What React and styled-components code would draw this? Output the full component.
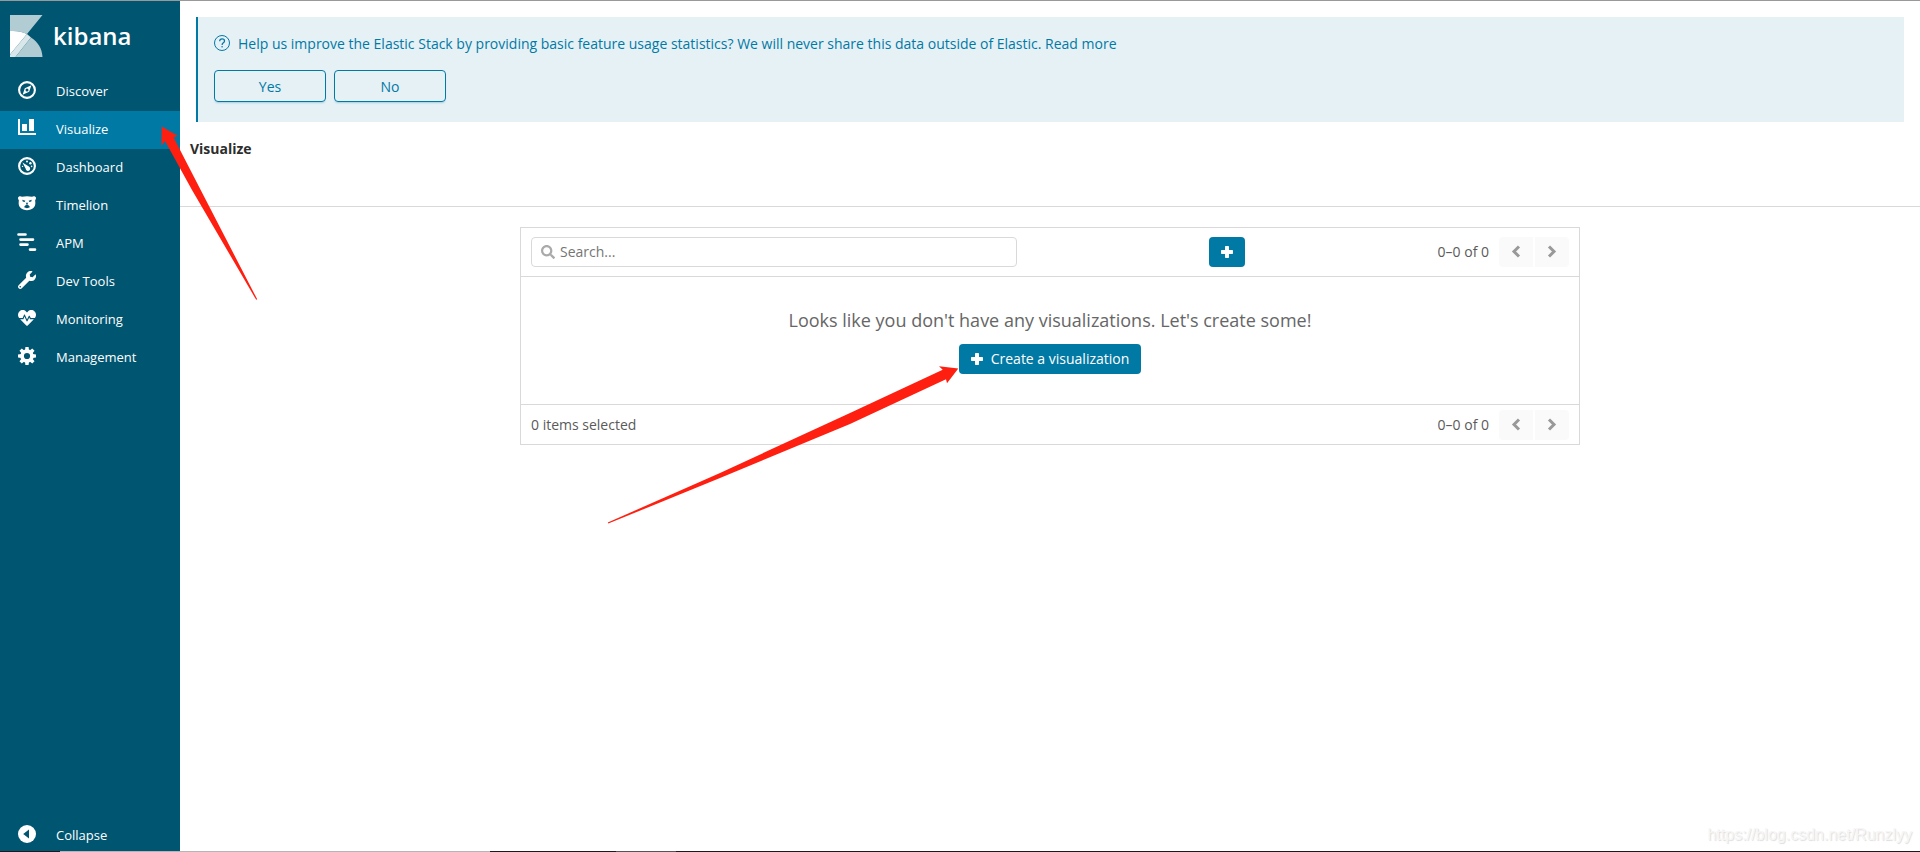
import React from 'react';
import styled, { createGlobalStyle } from 'styled-components';
import { FaHeartbeat, FaSearch, FaWrench } from 'react-icons/fa';

const DiscoverIcon = () => (
  <svg viewBox="0 0 18 18" width="18" height="18" fill="none">
    <circle cx="9" cy="9" r="7.9" stroke="#fff" strokeWidth="2.1" />
    <path
      fill="#fff"
      fillRule="evenodd"
      d="M13.4 4.2 11.2 10.8 4.6 13.8 6.8 7.2ZM9 7.5A1.5 1.5 0 1 0 9 10.5 1.5 1.5 0 0 0 9 7.5Z"
    />
  </svg>
);

const VisualizeIcon = () => (
  <svg viewBox="0 0 18 18" width="18" height="18" fill="#fff">
    <path d="M0 0h2v14h16v2H0zM4 5h5v7H4zM11 0h5v12h-5z" />
  </svg>
);

const DashboardIcon = () => (
  <svg viewBox="0 0 18 18" width="18" height="18" fill="#fff">
    <circle cx="9" cy="9" r="7.9" fill="none" stroke="#fff" strokeWidth="2.1" />
    <path d="M4.4 5.4 10.9 9.6A2.3 2.3 0 1 1 7.6 11.6Z" />
    <circle cx="9" cy="4.6" r="1" />
    <circle cx="12.4" cy="6.2" r="1.2" />
    <circle cx="13.6" cy="9.4" r=".8" />
    <circle cx="4.5" cy="9.4" r=".7" />
  </svg>
);

const TimelionIcon = () => (
  <svg viewBox="0 0 18 18" width="18" height="18">
    <path
      fill="#fff"
      d="M0 2.8C.2 1.2 2.6.8 4 1.8 7 1 11 1 14 1.8c1.4-1 3.8-.6 4 1 .1 1.2-.6 2-.9 2.8.5 2.8.3 5.3-1.3 6.9C14 14.3 11.5 15.2 9 15.2s-5-.9-6.8-2.7C.6 10.9.4 8.4.9 5.6.6 4.8-.1 4 0 2.8Z"
    />
    <path
      fill="#005571"
      d="M4.3 4.7 7.4 5.7 6.6 7.1 4.7 6.4ZM13.7 4.7 10.6 5.7 11.4 7.1 13.3 6.4ZM7.7 7.7h2.6L9.5 9v1c1.2 0 2.1 1 2.4 2.3-1.6 1.1-4.2 1.1-5.8 0 .3-1.3 1.2-2.3 2.4-2.3V9Z"
    />
  </svg>
);

const ApmIcon = () => (
  <svg
    viewBox="0 0 18 18"
    width="18"
    height="18"
    fill="none"
    stroke="#fff"
    strokeWidth="2.6"
    strokeLinecap="round"
    overflow="visible"
  >
    <path d="M.5 1.5H7.5M2.5 6.6H15M2.5 11.6H9.5M12 16.6H17" />
  </svg>
);

const GearIcon = () => (
  <svg viewBox="0 0 18 18" width="18" height="18">
    <circle cx="9" cy="9" r="4.9" fill="none" stroke="#fff" strokeWidth="3.6" />
    {[0, 45, 90, 135, 180, 225, 270, 315].map((angle) => (
      <path key={angle} fill="#fff" d="M7 3.5 7.4 0h3.2L11 3.5Z" transform={`rotate(${angle} 9 9)`} />
    ))}
  </svg>
);

const CollapseIcon = () => (
  <svg viewBox="0 0 18 18" width="18" height="18">
    <circle cx="9" cy="9" r="9" fill="#fff" />
    <path fill="#005571" d="M11 4.5v9L5.2 9Z" />
  </svg>
);

const PlusIcon = () => (
  <svg viewBox="0 0 12 12" width="12" height="12" fill="#fff">
    <path d="M4 .8Q4 0 4.8 0H7.2Q8 0 8 .8V4h3.2q.8 0 .8.8V7.2q0 .8-.8.8H8v3.2q0 .8-.8.8H4.8Q4 12 4 11.2V8H.8Q0 8 0 7.2V4.8Q0 4 .8 4H4Z" />
  </svg>
);

const ChevronIcon = ({ next }) => (
  <svg viewBox="0 0 12 14" width="12" height="14" fill="none" stroke="#999" strokeWidth="3">
    <path d={next ? 'M3 1.5 8 6.5 3 11.5' : 'M9 1.5 4 6.5 9 11.5'} />
  </svg>
);

const HelpIcon = () => (
  <svg viewBox="0 0 16 16" width="16" height="16" fill="none" stroke="#0079a5">
    <circle cx="8" cy="8" r="7.5" />
    <path strokeWidth="1.3" d="M5.7 6.2C5.7 4.7 6.6 3.8 8.1 3.8s2.4.8 2.4 2.1c0 1.9-2.4 1.8-2.4 4" />
    <circle cx="8.1" cy="11.8" r=".8" fill="#0079a5" stroke="none" />
  </svg>
);

const KibanaMark = () => (
  <svg viewBox="0 0 33 42" width="33" height="42">
    <path fill="#b2ccd4" d="M0 0H32.5L17 19C12 16.5 6 15.5 0 16Z" />
    <path fill="#fff" d="M0 16C6 15.5 12 16.5 17 19L0 39.5Z" />
    <path fill="#d9e6ea" d="M17 19 21 22.5 5.5 42H0V39.5Z" />
    <path fill="#b2ccd4" d="M21 22.5C28 27 32 33.5 32.5 42H5.5Z" />
  </svg>
);

const navigation = [
  { title: 'Discover', icon: <DiscoverIcon /> },
  { title: 'Visualize', icon: <VisualizeIcon />, active: true },
  { title: 'Dashboard', icon: <DashboardIcon /> },
  { title: 'Timelion', icon: <TimelionIcon /> },
  { title: 'APM', icon: <ApmIcon /> },
  { title: 'Dev Tools', icon: <FaWrench /> },
  { title: 'Monitoring', icon: <FaHeartbeat /> },
  { title: 'Management', icon: <GearIcon /> },
];

function Pagination() {
  return (
    <Pager>
      <span>0–0 of 0</span>
      <PagerButtons>
        <PagerButton $side="left" aria-label="Previous page">
          <ChevronIcon />
        </PagerButton>
        <PagerButton $side="right" aria-label="Next page">
          <ChevronIcon next />
        </PagerButton>
      </PagerButtons>
    </Pager>
  );
}

function Sidebar() {
  return (
    <StyledSidebar>
      <Logo href="#">
        <KibanaMark />
        <span>kibana</span>
      </Logo>
      <nav>
        {navigation.map((item) => (
          <NavLink href="#" key={item.title} $active={item.active}>
            <NavIcon>{item.icon}</NavIcon>
            <NavText>{item.title}</NavText>
            {item.active && (
              <NavArrow viewBox="160 125 98 176" width="98" height="176">
                <path d="M161.7 126.5 178 136 173.5 137.2 200.7 190 257.2 299.3 256.2 299.8 192 190 165 141 161.5 145.5Z" />
              </NavArrow>
            )}
          </NavLink>
        ))}
      </nav>
      <CollapseButton>
        <NavIcon>
          <CollapseIcon />
        </NavIcon>
        <NavText>Collapse</NavText>
      </CollapseButton>
    </StyledSidebar>
  );
}

function Banner() {
  return (
    <StyledBanner>
      <BannerText>
        <HelpIcon />
        <p>
          Help us improve the Elastic Stack by providing basic feature usage statistics? We will never share this data
          outside of Elastic. <a href="#">Read more</a>
        </p>
      </BannerText>
      <BannerActions>
        <OutlineButton>Yes</OutlineButton>
        <OutlineButton>No</OutlineButton>
      </BannerActions>
    </StyledBanner>
  );
}

function App() {
  return (
    <>
      <GlobalStyle />
      <Shell>
        <Sidebar />
        <Main>
          <Banner />
          <PageHeader>
            <h1>Visualize</h1>
          </PageHeader>
          <Panel>
            <ToolBar>
              <SearchBox>
                <FaSearch />
                <input type="text" placeholder="Search..." aria-label="Search" />
              </SearchBox>
              <PrimaryButton aria-label="Create new visualization">
                <PlusIcon />
              </PrimaryButton>
              <Pagination />
            </ToolBar>
            <EmptyPrompt>
              <p>Looks like you don't have any visualizations. Let's create some!</p>
              <CreateAction>
                <PrimaryButton>
                  <PlusIcon />
                  Create a visualization
                </PrimaryButton>
                <CreateArrow viewBox="607 365 352 160" width="352" height="160">
                  <path d="M958.3 368.5 947 383.3 946 379.2 850 424 720 478 608.3 523.6 607.8 522.5 720 473 850 413 942.7 369.7 939 366.3Z" />
                </CreateArrow>
              </CreateAction>
            </EmptyPrompt>
            <PanelFooter>
              <span>0 items selected</span>
              <Pagination />
            </PanelFooter>
          </Panel>
        </Main>
        <Watermark>https://blog.csdn.net/Runzlyy</Watermark>
      </Shell>
      <BottomEdge />
    </>
  );
}

export default App;

const GlobalStyle = createGlobalStyle`
  * {
    box-sizing: border-box;
  }
  body {
    margin: 0;
    background-color: #fff;
    color: #5a5a5a;
    font-family: "Open Sans", "Noto Sans", sans-serif;
    font-size: 14px;
    line-height: 20px;
  }
  button, input {
    font: inherit;
  }
  button {
    cursor: pointer;
  }
  p, h1 {
    margin: 0;
  }
  a {
    color: inherit;
    text-decoration: none;
  }
`;

const Shell = styled.div`
  position: relative;
  display: grid;
  grid-template-columns: 180px 1fr;
  min-height: calc(100vh - 1px);
  border-top: 1px solid #999;
`;

const StyledSidebar = styled.aside`
  display: flex;
  flex-direction: column;
  background-color: #005571;
  color: #fff;
`;

const Logo = styled.a`
  display: flex;
  align-items: center;
  gap: 10px;
  height: 72px;
  padding: 0 10px 2px;
  span {
    font-size: 24px;
    font-weight: 600;
    line-height: 32px;
  }
`;

const NavLink = styled.a`
  position: relative;
  display: flex;
  align-items: flex-start;
  height: 38px;
  padding-left: 18px;
  background-color: ${(props) => (props.$active ? '#0079a5' : 'transparent')};
`;

const CollapseButton = styled.button`
  display: flex;
  align-items: flex-start;
  height: 34px;
  margin-top: auto;
  padding: 0 0 0 18px;
  border: none;
  background: none;
  color: #fff;
`;

const NavIcon = styled.span`
  display: flex;
  align-items: center;
  width: 38px;
  height: 34px;
  font-size: 18px;
`;

const NavText = styled.span`
  font-size: 13px;
  line-height: 36px;
`;

const NavArrow = styled.svg`
  position: absolute;
  top: 14px;
  left: 160px;
  z-index: 2;
  fill: #ff1f10;
  pointer-events: none;
`;

const Main = styled.main`
  min-width: 0;
`;

const StyledBanner = styled.section`
  margin: 16px;
  padding: 16px 16px 20px;
  border-left: 2px solid #0079a5;
  background-color: #e6f1f6;
  color: #0079a5;
`;

const BannerText = styled.div`
  display: flex;
  align-items: flex-start;
  gap: 8px;
  svg {
    flex: none;
    margin-top: 2px;
  }
  p {
    line-height: 22px;
  }
`;

const BannerActions = styled.div`
  display: flex;
  gap: 8px;
  margin-top: 15px;
`;

const OutlineButton = styled.button`
  width: 112px;
  height: 32px;
  padding: 2px 12px 0;
  border: 1px solid #0079a5;
  border-radius: 4px;
  background: none;
  color: #0079a5;
  box-shadow: 0 2px 2px -1px rgba(0, 121, 165, 0.3);
`;

const PageHeader = styled.header`
  height: 69px;
  padding: 0 10px;
  border-bottom: 1px solid #d9d9d9;
  h1 {
    color: #2d2d2d;
    font-size: 14px;
    font-weight: 700;
    line-height: 22px;
  }
`;

const Panel = styled.section`
  max-width: 1060px;
  margin: 20px auto;
  border: 1px solid #d9d9d9;
`;

const ToolBar = styled.div`
  display: flex;
  justify-content: space-between;
  align-items: center;
  padding: 9px 10px;
`;

const SearchBox = styled.label`
  display: flex;
  align-items: center;
  gap: 5px;
  flex: 0 1 486px;
  height: 30px;
  padding: 0 9px;
  border: 1px solid #d9d9d9;
  border-radius: 4px;
  color: #aaa;
  input {
    flex: 1;
    min-width: 0;
    padding: 0;
    border: none;
    outline: none;
    background: none;
    color: #5a5a5a;
  }
  input::placeholder {
    color: #757575;
    opacity: 1;
  }
`;

const PrimaryButton = styled.button`
  display: flex;
  align-items: center;
  gap: 8px;
  height: 30px;
  padding: 0 12px;
  border: none;
  border-radius: 4px;
  background-color: #0079a5;
  color: #fff;
`;

const Pager = styled.div`
  display: flex;
  align-items: center;
  gap: 10px;
`;

const PagerButtons = styled.div`
  display: flex;
  gap: 2px;
`;

const PagerButton = styled.button`
  display: flex;
  justify-content: center;
  align-items: center;
  width: 34px;
  height: 30px;
  padding: 0;
  border: none;
  border-radius: ${(props) => (props.$side === 'left' ? '4px 0 0 4px' : '0 4px 4px 0')};
  background-color: #fafafa;
`;

const EmptyPrompt = styled.div`
  display: flex;
  flex-direction: column;
  align-items: center;
  gap: 10px;
  padding: 30px 10px;
  border-top: 1px solid #d9d9d9;
  border-bottom: 1px solid #d9d9d9;
  p {
    color: #666;
    font-size: 18px;
    line-height: 27px;
  }
`;

const CreateAction = styled.div`
  position: relative;
`;

const CreateArrow = styled.svg`
  position: absolute;
  top: 21px;
  right: 100%;
  fill: #ff1f10;
  pointer-events: none;
`;

const PanelFooter = styled.div`
  display: flex;
  justify-content: space-between;
  align-items: center;
  padding: 5px 10px 4px;
`;

const Watermark = styled.span`
  position: absolute;
  right: 8px;
  bottom: 6px;
  color: #f6f6f6;
  font-family: "Liberation Sans", Arial, sans-serif;
  font-size: 16px;
  text-shadow: 1px 1px 1px #ddd;
`;

const BottomEdge = styled.div`
  height: 1px;
  background: linear-gradient(
    to right,
    #1a1a1a 60px,
    #b5b5b5 60px 490px,
    #1a1a1a 490px 616px,
    #555 616px 676px,
    #1a1a1a 676px
  );
`;
